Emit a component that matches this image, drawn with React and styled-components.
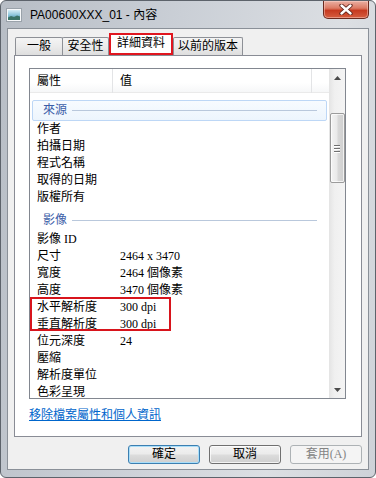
import React from "react";
import styled, { createGlobalStyle } from "styled-components";

const Global = createGlobalStyle`
  html, body { margin: 0; padding: 0; background: #ffffff; }
  body { width: 376px; height: 478px; overflow: hidden; }
  #root { width: 376px; height: 478px; }
`;

const LIST = `"Liberation Serif", "Noto Sans CJK TC", serif`;
const UI = `"Liberation Sans", "Noto Sans CJK TC", sans-serif`;

const Window = styled.div`
  box-sizing: border-box;
  width: 376px;
  height: 478px;
  display: flex;
  flex-direction: column;
  border: 1px solid #5d636b;
  border-radius: 6px;
  background: linear-gradient(100deg, #b7bdc5 0%, #cacfd6 40%, #dcdfe3 76%, #ced2d8 100%);
  overflow: hidden;
`;

const TitleBar = styled.div`
  height: 27px;
  display: flex;
  align-items: flex-start;
  padding-left: 5px;
  flex-shrink: 0;
`;

const TitleIcon = styled.svg`
  margin-top: 7px;
  flex-shrink: 0;
`;

const TitleText = styled.div`
  margin-left: 8px;
  margin-top: 7px;
  font-family: ${UI};
  font-size: 12px;
  line-height: 14px;
  color: #000;
  white-space: nowrap;
`;

const CloseButton = styled.div`
  margin-left: auto;
  margin-right: 6px;
  width: 46px;
  height: 18px;
  box-sizing: border-box;
  border: 1px solid #6a2a1f;
  border-top: none;
  border-radius: 0 0 5px 5px;
  background: linear-gradient(#eab0a3 0%, #dc7a64 42%, #c63a20 56%, #d65e40 100%);
  box-shadow: inset 0 0 0 1px rgba(255, 220, 210, 0.45);
  display: flex;
  align-items: center;
  justify-content: center;
`;

const Client = styled.div`
  margin: 0 6px;
  height: 442px;
  box-sizing: border-box;
  border: 1px solid #8a9098;
  background: #f0f0f0;
  display: flex;
  flex-direction: column;
  flex-shrink: 0;
`;

const TabStrip = styled.div`
  height: 22px;
  margin-top: 4px;
  padding-left: 7px;
  display: flex;
  align-items: flex-end;
`;

const Tab = styled.div`
  box-sizing: border-box;
  width: ${(p) => p.$w}px;
  height: 18px;
  border: 1px solid #8d9096;
  border-bottom: none;
  border-radius: 2px 2px 0 0;
  background: linear-gradient(#f4f4f4 0%, #ebebeb 50%, #dedede 100%);
  font-family: ${LIST};
  font-size: 12px;
  line-height: 17px;
  color: #000;
  text-align: center;
  & + & { margin-left: -1px; }
`;

const ActiveTab = styled.div`
  box-sizing: border-box;
  width: ${(p) => p.$w}px;
  height: 22px;
  border: 2px solid #e0161f;
  background: #ffffff;
  font-family: ${LIST};
  font-size: 12px;
  line-height: 17px;
  color: #000;
  text-align: center;
`;

const Panel = styled.div`
  margin: 0 6px;
  height: 382px;
  box-sizing: border-box;
  border: 1px solid #898c95;
  background: #ffffff;
  padding: 12px 14px 0 14px;
  display: flex;
  flex-direction: column;
`;

const ListView = styled.div`
  width: 317px;
  height: 331px;
  box-sizing: border-box;
  border: 1px solid #828790;
  display: flex;
  overflow: hidden;
  flex-shrink: 0;
`;

const ListMain = styled.div`
  flex: 1;
  display: flex;
  flex-direction: column;
  overflow: hidden;
`;

const Header = styled.div`
  height: 24px;
  flex-shrink: 0;
  box-sizing: border-box;
  display: grid;
  grid-template-columns: 83px 199px 1fr;
  background: linear-gradient(#ffffff 0%, #ffffff 60%, #f6f7f8 100%);
  border-bottom: 1px solid #eaeaea;
`;

const HeaderCell = styled.div`
  padding-left: 7px;
  border-right: 1px solid #e3e4e6;
  font-family: ${LIST};
  font-size: 12px;
  line-height: 24px;
  color: #000;
  &:last-child { border-right: none; }
`;

const Rows = styled.div`
  padding-top: 3px;
  display: flex;
  flex-direction: column;
`;

const GroupHeader = styled.div`
  height: 21px;
  margin: 4px 2px 0 2px;
  box-sizing: border-box;
  border: 1px solid ${(p) => (p.$focused ? "#bdd7f6" : "transparent")};
  border-radius: 2px;
  background: ${(p) =>
    p.$focused ? "linear-gradient(#f7fbff 0%, #edf5fd 100%)" : "transparent"};
  padding: 0 9px 0 10px;
  display: flex;
  align-items: center;
  flex-shrink: 0;
`;

const GroupTitle = styled.span`
  font-family: ${LIST};
  font-size: 12px;
  line-height: 17px;
  color: #3c5ea8;
`;

const GroupLine = styled.div`
  flex: 1;
  height: 1px;
  margin-left: 5px;
  background: #b9c8dc;
`;

const Row = styled.div`
  height: 17px;
  flex-shrink: 0;
  padding-left: 7px;
  display: grid;
  grid-template-columns: 83px 1fr;
  font-family: ${LIST};
  font-size: 12px;
  line-height: 17px;
  color: #000;
  white-space: nowrap;
`;

const Highlight = styled.div`
  position: relative;
  display: flex;
  flex-direction: column;
  &::after {
    content: "";
    position: absolute;
    left: 0;
    top: -2px;
    width: 141px;
    height: 34px;
    box-sizing: border-box;
    border: 2px solid #d8141c;
    pointer-events: none;
  }
`;

const ScrollBar = styled.div`
  width: 16px;
  flex-shrink: 0;
  display: flex;
  flex-direction: column;
  background: linear-gradient(to right, #e4e4e4 0%, #f0f0f0 35%, #f4f4f4 100%);
`;

const ArrowButton = styled.div`
  height: 17px;
  flex-shrink: 0;
  display: flex;
  align-items: center;
  justify-content: center;
`;

const Track = styled.div`
  flex: 1;
  display: flex;
  flex-direction: column;
  align-items: center;
`;

const Thumb = styled.div`
  margin-top: 27px;
  width: 15px;
  height: 70px;
  box-sizing: border-box;
  border: 1px solid #9b9b9b;
  border-radius: 2px;
  background: linear-gradient(to right, #f3f3f3 0%, #e9e9e9 45%, #d8d8d8 55%, #cfcfcf 100%);
  box-shadow: inset 0 0 0 1px rgba(255, 255, 255, 0.7);
  display: flex;
  flex-direction: column;
  align-items: center;
  justify-content: center;
  gap: 2px;
`;

const Grip = styled.div`
  width: 6px;
  height: 1px;
  background: #6f6f6f;
  box-shadow: 0 1px 0 #ffffff;
`;

const Link = styled.a`
  margin-top: 8px;
  align-self: flex-start;
  font-family: ${LIST};
  font-size: 12px;
  line-height: 16px;
  color: #0066cc;
  text-decoration: underline;
  cursor: pointer;
`;

const ButtonRow = styled.div`
  margin-top: 8px;
  padding-right: 6px;
  display: flex;
  justify-content: flex-end;
  gap: 9px;
`;

const Button = styled.div`
  width: 72px;
  height: 19px;
  box-sizing: border-box;
  border-radius: 3px;
  border: 1px solid ${(p) => (p.$default ? "#3c7fb1" : p.$disabled ? "#adb2b5" : "#707070")};
  background: ${(p) =>
    p.$disabled
      ? "#f4f4f4"
      : "linear-gradient(#f3f3f3 0%, #ebebeb 49%, #dddddd 51%, #cfcfcf 100%)"};
  box-shadow: ${(p) =>
    p.$default
      ? "inset 0 0 0 1px #a9def9"
      : p.$disabled
      ? "none"
      : "inset 0 0 0 1px rgba(255,255,255,0.75)"};
  font-family: ${LIST};
  font-size: 12px;
  line-height: 17px;
  color: ${(p) => (p.$disabled ? "#838383" : "#000")};
  text-align: center;
`;

const UpArrow = () => (
  <svg width="7" height="4" viewBox="0 0 7 4">
    <path d="M0 4 L3.5 0 L7 4 Z" fill="#4a4a4a" />
  </svg>
);

const DownArrow = () => (
  <svg width="7" height="4" viewBox="0 0 7 4">
    <path d="M0 0 L7 0 L3.5 4 Z" fill="#4a4a4a" />
  </svg>
);

const sourceRows = ["作者", "拍攝日期", "程式名稱", "取得的日期", "版權所有"];
const imageRows = [
  ["影像 ID", ""],
  ["尺寸", "2464 x 3470"],
  ["寬度", "2464 個像素"],
  ["高度", "3470 個像素"],
];
const markedRows = [
  ["水平解析度", "300 dpi"],
  ["垂直解析度", "300 dpi"],
];
const moreRows = [
  ["位元深度", "24"],
  ["壓縮", ""],
  ["解析度單位", ""],
  ["色彩呈現", ""],
];

const PropRow = ({ name, value }) => (
  <Row>
    <span>{name}</span>
    <span>{value}</span>
  </Row>
);

export default function App() {
  return (
    <>
      <Global />
      <Window>
        <TitleBar>
          <TitleIcon width="16" height="14" viewBox="0 0 16 14">
            <defs>
              <linearGradient id="sky" x1="0" y1="0" x2="0" y2="1">
                <stop offset="0" stopColor="#d6eef7" />
                <stop offset="0.5" stopColor="#8cc6dc" />
                <stop offset="1" stopColor="#3f8196" />
              </linearGradient>
            </defs>
            <rect x="0.5" y="0.5" width="15" height="13" fill="#f6f8fa" stroke="#9aa2aa" />
            <rect x="2" y="2" width="12" height="10" fill="url(#sky)" />
            <path d="M2 9.5 L5 8 L8 9 L11 7.5 L14 8.5 L14 12 L2 12 Z" fill="#3a7468" />
          </TitleIcon>
          <TitleText>PA00600XXX_01 - 內容</TitleText>
          <CloseButton>
            <svg width="14" height="11" viewBox="0 0 14 11">
              <path d="M2.5 1.5 L11.5 9.5 M11.5 1.5 L2.5 9.5" stroke="#5e2219" strokeWidth="4.2" strokeLinecap="round" />
              <path d="M2.5 1.5 L11.5 9.5 M11.5 1.5 L2.5 9.5" stroke="#ffffff" strokeWidth="2.4" strokeLinecap="round" />
            </svg>
          </CloseButton>
        </TitleBar>
        <Client>
          <TabStrip>
            <Tab $w={48}>一般</Tab>
            <Tab $w={47}>安全性</Tab>
            <ActiveTab $w={64}>詳細資料</ActiveTab>
            <Tab $w={70}>以前的版本</Tab>
          </TabStrip>
          <Panel>
            <ListView>
              <ListMain>
                <Header>
                  <HeaderCell>屬性</HeaderCell>
                  <HeaderCell>值</HeaderCell>
                  <HeaderCell />
                </Header>
                <Rows>
                  <GroupHeader $focused>
                    <GroupTitle>來源</GroupTitle>
                    <GroupLine />
                  </GroupHeader>
                  {sourceRows.map((n) => (
                    <PropRow key={n} name={n} value="" />
                  ))}
                  <GroupHeader>
                    <GroupTitle>影像</GroupTitle>
                    <GroupLine />
                  </GroupHeader>
                  {imageRows.map(([n, v]) => (
                    <PropRow key={n} name={n} value={v} />
                  ))}
                  <Highlight>
                    {markedRows.map(([n, v]) => (
                      <PropRow key={n} name={n} value={v} />
                    ))}
                  </Highlight>
                  {moreRows.map(([n, v]) => (
                    <PropRow key={n} name={n} value={v} />
                  ))}
                </Rows>
              </ListMain>
              <ScrollBar>
                <ArrowButton>
                  <UpArrow />
                </ArrowButton>
                <Track>
                  <Thumb>
                    <Grip />
                    <Grip />
                    <Grip />
                  </Thumb>
                </Track>
                <ArrowButton>
                  <DownArrow />
                </ArrowButton>
              </ScrollBar>
            </ListView>
            <Link>移除檔案屬性和個人資訊</Link>
          </Panel>
          <ButtonRow>
            <Button $default>確定</Button>
            <Button>取消</Button>
            <Button $disabled>套用(A)</Button>
          </ButtonRow>
        </Client>
      </Window>
    </>
  );
}
